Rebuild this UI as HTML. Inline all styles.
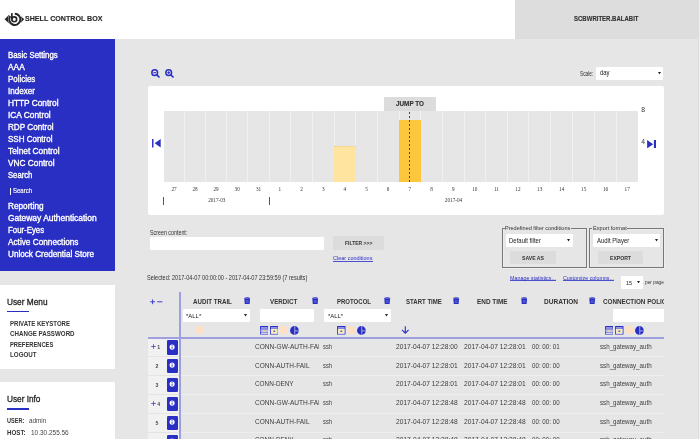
<!DOCTYPE html>
<html><head><meta charset="utf-8"><title>Shell Control Box</title><style>html,body{margin:0;padding:0;}body{width:700px;height:439px;overflow:hidden;position:relative;background:#e6e6e6;font-family:'Liberation Sans',sans-serif;}#r{position:absolute;left:0;top:0;width:700px;height:439px;overflow:hidden;will-change:transform;transform:translateZ(0);}#r div,#r svg,#r span{position:absolute;display:block;}.t{white-space:pre;line-height:1;}</style></head><body><div id="r">
<div style="left:0px;top:0px;width:514.5px;height:39px;background:#fff;"></div>
<div style="left:514.5px;top:0px;width:183.5px;height:39px;background:#dddddd;"></div>
<div style="left:698px;top:0px;width:1px;height:439px;background:#dcdcdc;"></div>
<div style="left:699px;top:0px;width:1px;height:439px;background:#f0f0f0;"></div>
<svg style="left:4px;top:11px" width="21" height="16" viewBox="4 11 21 16"><path d="M4.6 19.2L9.4 14.6V23.8Z" fill="#262626"/><path d="M24.2 19.3L21.0 16.2V22.4Z" fill="#262626"/><circle cx="14.8" cy="19.35" r="6.8" fill="#fff"/><path d="M14.80 13.75A5.6 5.6 0 1 1 10.27 16.06" fill="none" stroke="#262626" stroke-width="2.0"/><circle cx="14.25" cy="19.3" r="2.4" fill="none" stroke="#262626" stroke-width="1.65"/><rect x="11.03" y="13.1" width="1.65" height="6.4" fill="#262626"/></svg>
<div style="left:0px;top:39px;width:115px;height:232px;background:#2a2fc4;"></div>
<div style="left:9.9px;top:187.5px;width:1.2px;height:7.5px;background:#fff;"></div>
<div style="left:0px;top:285px;width:115px;height:83.5px;background:#fff;"></div>
<div style="left:7.4px;top:310.7px;width:22px;height:1.7px;background:#2a2fc4;"></div>
<div style="left:0px;top:382px;width:115px;height:60px;background:#fff;"></div>
<div style="left:7.4px;top:408px;width:22px;height:1.5px;background:#2a2fc4;"></div>
<div style="left:147.5px;top:86.3px;width:516.3px;height:129px;background:#fff;border-radius:2px;"></div>
<div style="left:595.8px;top:66.7px;width:67.5px;height:13.4px;background:#fff;border-radius:1px;"></div>
<svg style="left:657.6px;top:71.8px" width="3.0" height="2.4" viewBox="0 0 10 8"><path d="M0 0H10L5 8Z" fill="#222"/></svg>
<div style="left:163.7px;top:110.8px;width:474.3px;height:71.2px;background:#e6e6e6;"></div>
<div style="left:184.0px;top:110.8px;width:1px;height:71.2px;background:#f1f1f1;"></div>
<div style="left:205.0px;top:110.8px;width:1px;height:71.2px;background:#f1f1f1;"></div>
<div style="left:226.0px;top:110.8px;width:1px;height:71.2px;background:#f1f1f1;"></div>
<div style="left:247.4px;top:110.8px;width:1px;height:71.2px;background:#f1f1f1;"></div>
<div style="left:268.7px;top:110.8px;width:1px;height:71.2px;background:#f1f1f1;"></div>
<div style="left:290.0px;top:110.8px;width:1px;height:71.2px;background:#f1f1f1;"></div>
<div style="left:312.0px;top:110.8px;width:1px;height:71.2px;background:#f1f1f1;"></div>
<div style="left:333.6px;top:110.8px;width:1px;height:71.2px;background:#f1f1f1;"></div>
<div style="left:355.2px;top:110.8px;width:1px;height:71.2px;background:#f1f1f1;"></div>
<div style="left:376.7px;top:110.8px;width:1px;height:71.2px;background:#f1f1f1;"></div>
<div style="left:398.6px;top:110.8px;width:1px;height:71.2px;background:#f1f1f1;"></div>
<div style="left:420.0px;top:110.8px;width:1px;height:71.2px;background:#f1f1f1;"></div>
<div style="left:442.0px;top:110.8px;width:1px;height:71.2px;background:#f1f1f1;"></div>
<div style="left:463.5px;top:110.8px;width:1px;height:71.2px;background:#f1f1f1;"></div>
<div style="left:485.1px;top:110.8px;width:1px;height:71.2px;background:#f1f1f1;"></div>
<div style="left:506.7px;top:110.8px;width:1px;height:71.2px;background:#f1f1f1;"></div>
<div style="left:528.2px;top:110.8px;width:1px;height:71.2px;background:#f1f1f1;"></div>
<div style="left:550.1px;top:110.8px;width:1px;height:71.2px;background:#f1f1f1;"></div>
<div style="left:572.2px;top:110.8px;width:1px;height:71.2px;background:#f1f1f1;"></div>
<div style="left:594.1px;top:110.8px;width:1px;height:71.2px;background:#f1f1f1;"></div>
<div style="left:615.9px;top:110.8px;width:1px;height:71.2px;background:#f1f1f1;"></div>
<div style="left:334.1px;top:146.4px;width:21.6px;height:35.6px;background:#ffe4a0;border-top:0.8px dotted #f0cf78;box-sizing:border-box;"></div>
<div style="left:399.0px;top:119.7px;width:21.6px;height:62.3px;background:#fcc73c;"></div>
<div style="left:409.3px;top:111.5px;width:1.2px;height:70.5px;background:repeating-linear-gradient(to bottom,#4a4a4a 0,#4a4a4a 1.7px,transparent 1.7px,transparent 4px);"></div>
<div style="left:383.9px;top:96.5px;width:51.8px;height:14.3px;background:#dcdcdc;border-radius:1px 1px 0 0;"></div>
<div style="left:163.3px;top:196.5px;width:0.8px;height:8px;background:#555;"></div>
<div style="left:269.0px;top:196.5px;width:0.8px;height:8px;background:#555;"></div>
<svg style="left:151.9px;top:139.4px" width="8.8" height="8.5" viewBox="0 0 8.8 8.5"><rect x="0.05" y="0" width="1.45" height="8.5" fill="#2a2fc4"/><path d="M8.7 0V8.5L2.7 4.25Z" fill="#2a2fc4"/></svg>
<svg style="left:647px;top:139.5px" width="9.2" height="8.4" viewBox="0 0 9.2 8.4"><rect x="6.9" y="0" width="2.1" height="8.4" fill="#2a2fc4"/><path d="M0.1 0V8.4L6.2 4.2Z" fill="#2a2fc4"/></svg>
<svg style="left:150.5px;top:68.8px" width="9" height="9" viewBox="0 0 9 9"><circle cx="3.7" cy="3.7" r="2.85" fill="none" stroke="#2a2fc4" stroke-width="1.5"/><path d="M6.0 6.0L8.0 8.0" stroke="#2a2fc4" stroke-width="1.7" stroke-linecap="round"/><path d="M2.3 3.7H5.1" stroke="#2a2fc4" stroke-width="1.1" fill="none"/></svg>
<svg style="left:165.0px;top:68.8px" width="9" height="9" viewBox="0 0 9 9"><circle cx="3.7" cy="3.7" r="2.85" fill="none" stroke="#2a2fc4" stroke-width="1.5"/><path d="M6.0 6.0L8.0 8.0" stroke="#2a2fc4" stroke-width="1.7" stroke-linecap="round"/><path d="M2.3 3.7H5.1" stroke="#2a2fc4" stroke-width="1.1" fill="none"/><path d="M3.7 2.3V5.1" stroke="#2a2fc4" stroke-width="1.1" fill="none"/></svg>
<div style="left:150.3px;top:236.8px;width:173.8px;height:13.1px;background:#fff;border-radius:1px;"></div>
<div style="left:332.7px;top:236.1px;width:51.7px;height:14.1px;background:#dcdcdc;border-radius:1px;"></div>
<div style="left:333.3px;top:260.65px;width:39.4px;height:0.75px;background:#4b50cf;"></div>
<div style="left:501.8px;top:227.8px;width:85.4px;height:40.2px;border:1px solid #777;box-shadow:inset 0.6px 0.6px 0 #f4f4f4, 0.6px 0.6px 0 #f4f4f4;box-sizing:border-box;"></div>
<div style="left:589.2px;top:227.8px;width:74.8px;height:40.2px;border:1px solid #777;box-shadow:inset 0.6px 0.6px 0 #f4f4f4, 0.6px 0.6px 0 #f4f4f4;box-sizing:border-box;"></div>
<div style="left:504.6px;top:225px;width:66.2px;height:6px;background:#e6e6e6;"></div>
<div style="left:592.0px;top:225px;width:34.8px;height:6px;background:#e6e6e6;"></div>
<div style="left:505.8px;top:234.4px;width:67.4px;height:12.9px;background:#fff;border-radius:1px;"></div>
<div style="left:592.9px;top:234.4px;width:67.4px;height:12.9px;background:#fff;border-radius:1px;"></div>
<svg style="left:567.2px;top:239.4px" width="3.0" height="2.4" viewBox="0 0 10 8"><path d="M0 0H10L5 8Z" fill="#222"/></svg>
<svg style="left:654.7px;top:239.4px" width="3.0" height="2.4" viewBox="0 0 10 8"><path d="M0 0H10L5 8Z" fill="#222"/></svg>
<div style="left:510.1px;top:250.9px;width:45.9px;height:13.6px;background:#dcdcdc;border-radius:1px;"></div>
<div style="left:597.9px;top:250.9px;width:45.2px;height:13.6px;background:#dcdcdc;border-radius:1px;"></div>
<div style="left:509.8px;top:280.3px;width:45.9px;height:0.75px;background:#4b50cf;"></div>
<div style="left:562.7px;top:280.3px;width:50.9px;height:0.75px;background:#4b50cf;"></div>
<div style="left:620.8px;top:275.8px;width:21.8px;height:13.2px;background:#fff;border-radius:1px;"></div>
<svg style="left:636.8px;top:281px" width="3.0" height="2.4" viewBox="0 0 10 8"><path d="M0 0H10L5 8Z" fill="#222"/></svg>
<div style="left:147.5px;top:337.8px;width:31.3px;height:102px;background:#f1f1f1;"></div>
<div style="left:147.5px;top:355.8px;width:31.3px;height:1px;background:#e4e4e4;"></div>
<div style="left:180.6px;top:355.8px;width:483.4px;height:1px;background:#eeeeee;"></div>
<div style="left:147.5px;top:374.7px;width:31.3px;height:1px;background:#e4e4e4;"></div>
<div style="left:180.6px;top:374.7px;width:483.4px;height:1px;background:#eeeeee;"></div>
<div style="left:147.5px;top:393.6px;width:31.3px;height:1px;background:#e4e4e4;"></div>
<div style="left:180.6px;top:393.6px;width:483.4px;height:1px;background:#eeeeee;"></div>
<div style="left:147.5px;top:412.7px;width:31.3px;height:1px;background:#e4e4e4;"></div>
<div style="left:180.6px;top:412.7px;width:483.4px;height:1px;background:#eeeeee;"></div>
<div style="left:147.5px;top:431.7px;width:31.3px;height:1px;background:#e4e4e4;"></div>
<div style="left:180.6px;top:431.7px;width:483.4px;height:1px;background:#eeeeee;"></div>
<div style="left:178.95px;top:291.9px;width:1.6px;height:150px;background:#9c9fe3;"></div>
<div style="left:147.5px;top:337.0px;width:516.5px;height:1.5px;background:#9ea0e1;"></div>
<svg style="left:149.8px;top:298.8px" width="13" height="6" viewBox="0 0 13 6"><path d="M0.2 2.8H5M2.6 0.4V5.2M7.2 2.8H12.4" stroke="#3f44cc" stroke-width="1.0" fill="none"/></svg>
<svg style="left:243.75px;top:296.9px" width="6.4" height="7.2" viewBox="0 0 6.4 7.2"><path d="M2.1 0.9V0.2H4.3V0.9" stroke="#2a2fc4" stroke-width="0.7" fill="none"/><rect x="0.1" y="0.8" width="6.2" height="1.0" rx="0.3" fill="#2a2fc4"/><path d="M0.4 1.9H6.0L5.7 6.6Q5.65 7.2 5.1 7.2H1.3Q0.75 7.2 0.7 6.6Z" fill="#2a2fc4"/><path d="M2.3 3V6M3.2 3V6M4.1 3V6" stroke="#7f83e0" stroke-width="0.45"/></svg>
<svg style="left:311.8px;top:296.9px" width="6.4" height="7.2" viewBox="0 0 6.4 7.2"><path d="M2.1 0.9V0.2H4.3V0.9" stroke="#2a2fc4" stroke-width="0.7" fill="none"/><rect x="0.1" y="0.8" width="6.2" height="1.0" rx="0.3" fill="#2a2fc4"/><path d="M0.4 1.9H6.0L5.7 6.6Q5.65 7.2 5.1 7.2H1.3Q0.75 7.2 0.7 6.6Z" fill="#2a2fc4"/><path d="M2.3 3V6M3.2 3V6M4.1 3V6" stroke="#7f83e0" stroke-width="0.45"/></svg>
<svg style="left:384.45px;top:296.9px" width="6.4" height="7.2" viewBox="0 0 6.4 7.2"><path d="M2.1 0.9V0.2H4.3V0.9" stroke="#2a2fc4" stroke-width="0.7" fill="none"/><rect x="0.1" y="0.8" width="6.2" height="1.0" rx="0.3" fill="#2a2fc4"/><path d="M0.4 1.9H6.0L5.7 6.6Q5.65 7.2 5.1 7.2H1.3Q0.75 7.2 0.7 6.6Z" fill="#2a2fc4"/><path d="M2.3 3V6M3.2 3V6M4.1 3V6" stroke="#7f83e0" stroke-width="0.45"/></svg>
<svg style="left:452.75px;top:296.9px" width="6.4" height="7.2" viewBox="0 0 6.4 7.2"><path d="M2.1 0.9V0.2H4.3V0.9" stroke="#2a2fc4" stroke-width="0.7" fill="none"/><rect x="0.1" y="0.8" width="6.2" height="1.0" rx="0.3" fill="#2a2fc4"/><path d="M0.4 1.9H6.0L5.7 6.6Q5.65 7.2 5.1 7.2H1.3Q0.75 7.2 0.7 6.6Z" fill="#2a2fc4"/><path d="M2.3 3V6M3.2 3V6M4.1 3V6" stroke="#7f83e0" stroke-width="0.45"/></svg>
<svg style="left:520.8499999999999px;top:296.9px" width="6.4" height="7.2" viewBox="0 0 6.4 7.2"><path d="M2.1 0.9V0.2H4.3V0.9" stroke="#2a2fc4" stroke-width="0.7" fill="none"/><rect x="0.1" y="0.8" width="6.2" height="1.0" rx="0.3" fill="#2a2fc4"/><path d="M0.4 1.9H6.0L5.7 6.6Q5.65 7.2 5.1 7.2H1.3Q0.75 7.2 0.7 6.6Z" fill="#2a2fc4"/><path d="M2.3 3V6M3.2 3V6M4.1 3V6" stroke="#7f83e0" stroke-width="0.45"/></svg>
<svg style="left:589.1999999999999px;top:296.9px" width="6.4" height="7.2" viewBox="0 0 6.4 7.2"><path d="M2.1 0.9V0.2H4.3V0.9" stroke="#2a2fc4" stroke-width="0.7" fill="none"/><rect x="0.1" y="0.8" width="6.2" height="1.0" rx="0.3" fill="#2a2fc4"/><path d="M0.4 1.9H6.0L5.7 6.6Q5.65 7.2 5.1 7.2H1.3Q0.75 7.2 0.7 6.6Z" fill="#2a2fc4"/><path d="M2.3 3V6M3.2 3V6M4.1 3V6" stroke="#7f83e0" stroke-width="0.45"/></svg>
<div style="left:182.6px;top:309.2px;width:67.7px;height:13.3px;background:#fff;border-radius:1px;"></div>
<div style="left:259.6px;top:309.2px;width:54.2px;height:13.3px;background:#fff;border-radius:1px;"></div>
<div style="left:323.9px;top:309.2px;width:67.1px;height:13.3px;background:#fff;border-radius:1px;"></div>
<div style="left:612.9px;top:309.2px;width:51.1px;height:13.3px;background:#fff;border-radius:1px 0 0 1px;"></div>
<svg style="left:244.1px;top:314.3px" width="3.0" height="2.4" viewBox="0 0 10 8"><path d="M0 0H10L5 8Z" fill="#222"/></svg>
<svg style="left:385.1px;top:314.3px" width="3.0" height="2.4" viewBox="0 0 10 8"><path d="M0 0H10L5 8Z" fill="#222"/></svg>
<svg style="left:196.2px;top:326.3px" width="8.2" height="7.9" viewBox="0 0 8.2 7.9"><rect x="0.1" y="0.1" width="6.1" height="6.6" rx="0.8" fill="#fde0c6"/><rect x="1.9" y="1.4" width="6.2" height="6.4" rx="0.8" fill="#fde0c6"/></svg>
<svg style="left:259.5px;top:326.1px" width="8.5" height="8.6" viewBox="0 0 8.5 8.6"><rect x="0" y="0" width="8.5" height="8.6" rx="0.4" fill="#2a2fc4"/><rect x="0.9" y="1.0" width="6.7" height="0.55" fill="#e9e9fb"/><rect x="0.8" y="2.5" width="6.9" height="5.4" fill="#e3e4fa"/><rect x="0.8" y="3.4" width="6.9" height="0.7" fill="#5b5fd6"/><rect x="0.8" y="6.2" width="6.9" height="0.7" fill="#5b5fd6"/><rect x="0.8" y="4.1" width="6.9" height="2.1" fill="#b9bbee"/><rect x="3.1" y="4.4" width="2.1" height="1.5" fill="#f6e27a"/></svg>
<svg style="left:269.7px;top:326.1px" width="8.5" height="8.6" viewBox="0 0 8.5 8.6"><rect x="0" y="0" width="8.5" height="8.6" rx="0.4" fill="#2a2fc4"/><rect x="0.9" y="1.0" width="6.7" height="0.55" fill="#e9e9fb"/><rect x="0.8" y="2.5" width="6.9" height="5.4" fill="#dcdcf8"/><rect x="1.3" y="3.1" width="5.9" height="4.2" fill="#fbeeb0"/><ellipse cx="4.3" cy="5.2" rx="1.15" ry="0.65" fill="#3a3fd0"/></svg>
<svg style="left:280.0px;top:326.3px" width="8.2" height="7.9" viewBox="0 0 8.2 7.9"><rect x="0.1" y="0.1" width="6.1" height="6.6" rx="0.8" fill="#fde0c6"/><rect x="1.9" y="1.4" width="6.2" height="6.4" rx="0.8" fill="#fde0c6"/></svg>
<svg style="left:289.9px;top:325.8px" width="9" height="9" viewBox="0 0 9 9"><circle cx="4.45" cy="4.5" r="4.4" fill="#2a2fc4"/><path d="M4.75 0V9" stroke="#ececf4" stroke-width="0.6" fill="none"/><path d="M4.75 4.9H9" stroke="#ececf4" stroke-width="0.6" fill="none"/></svg>
<svg style="left:337.0px;top:326.1px" width="8.5" height="8.6" viewBox="0 0 8.5 8.6"><rect x="0" y="0" width="8.5" height="8.6" rx="0.4" fill="#2a2fc4"/><rect x="0.9" y="1.0" width="6.7" height="0.55" fill="#e9e9fb"/><rect x="0.8" y="2.5" width="6.9" height="5.4" fill="#dcdcf8"/><rect x="1.3" y="3.1" width="5.9" height="4.2" fill="#fbeeb0"/><ellipse cx="4.3" cy="5.2" rx="1.15" ry="0.65" fill="#3a3fd0"/></svg>
<svg style="left:347.2px;top:326.3px" width="8.2" height="7.9" viewBox="0 0 8.2 7.9"><rect x="0.1" y="0.1" width="6.1" height="6.6" rx="0.8" fill="#fde0c6"/><rect x="1.9" y="1.4" width="6.2" height="6.4" rx="0.8" fill="#fde0c6"/></svg>
<svg style="left:357.0px;top:325.8px" width="9" height="9" viewBox="0 0 9 9"><circle cx="4.45" cy="4.5" r="4.4" fill="#2a2fc4"/><path d="M4.75 0V9" stroke="#ececf4" stroke-width="0.6" fill="none"/><path d="M4.75 4.9H9" stroke="#ececf4" stroke-width="0.6" fill="none"/></svg>
<svg style="left:604.9px;top:326.1px" width="8.5" height="8.6" viewBox="0 0 8.5 8.6"><rect x="0" y="0" width="8.5" height="8.6" rx="0.4" fill="#2a2fc4"/><rect x="0.9" y="1.0" width="6.7" height="0.55" fill="#e9e9fb"/><rect x="0.8" y="2.5" width="6.9" height="5.4" fill="#e3e4fa"/><rect x="0.8" y="3.4" width="6.9" height="0.7" fill="#5b5fd6"/><rect x="0.8" y="6.2" width="6.9" height="0.7" fill="#5b5fd6"/><rect x="0.8" y="4.1" width="6.9" height="2.1" fill="#b9bbee"/><rect x="3.1" y="4.4" width="2.1" height="1.5" fill="#f6e27a"/></svg>
<svg style="left:615.1px;top:326.1px" width="8.5" height="8.6" viewBox="0 0 8.5 8.6"><rect x="0" y="0" width="8.5" height="8.6" rx="0.4" fill="#2a2fc4"/><rect x="0.9" y="1.0" width="6.7" height="0.55" fill="#e9e9fb"/><rect x="0.8" y="2.5" width="6.9" height="5.4" fill="#dcdcf8"/><rect x="1.3" y="3.1" width="5.9" height="4.2" fill="#fbeeb0"/><ellipse cx="4.3" cy="5.2" rx="1.15" ry="0.65" fill="#3a3fd0"/></svg>
<svg style="left:625.3px;top:326.3px" width="8.2" height="7.9" viewBox="0 0 8.2 7.9"><rect x="0.1" y="0.1" width="6.1" height="6.6" rx="0.8" fill="#fde0c6"/><rect x="1.9" y="1.4" width="6.2" height="6.4" rx="0.8" fill="#fde0c6"/></svg>
<svg style="left:635.2px;top:325.8px" width="9" height="9" viewBox="0 0 9 9"><circle cx="4.45" cy="4.5" r="4.4" fill="#2a2fc4"/><path d="M4.75 0V9" stroke="#ececf4" stroke-width="0.6" fill="none"/><path d="M4.75 4.9H9" stroke="#ececf4" stroke-width="0.6" fill="none"/></svg>
<svg style="left:400.6px;top:326.2px" width="8.6" height="7.8" viewBox="0 0 8.6 7.8"><path d="M4.3 0.2V7M1 3.9L4.3 7.2L7.6 3.9" stroke="#2a2fc4" stroke-width="1.1" fill="none"/></svg>
<div style="left:166.9px;top:340.2px;width:10.8px;height:14.4px;background:#2a2fc4;border-radius:1.2px;"></div>
<svg style="left:169.25px;top:343.59999999999997px" width="6.2" height="6.2" viewBox="0 0 6.2 6.2"><circle cx="3.1" cy="3.1" r="2.55" fill="#fff"/><rect x="2.65" y="2.6" width="0.9" height="2.2" fill="#2a2fc4"/><rect x="2.65" y="1.2" width="0.9" height="0.9" fill="#2a2fc4"/></svg>
<svg style="left:150.6px;top:344.2px" width="5" height="5" viewBox="0 0 5 5"><path d="M0.2 2.5H4.8M2.5 0.2V4.8" stroke="#474cd2" stroke-width="0.85" fill="none"/></svg>
<div style="left:166.9px;top:358.8px;width:10.8px;height:14.4px;background:#2a2fc4;border-radius:1.2px;"></div>
<svg style="left:169.25px;top:362.2px" width="6.2" height="6.2" viewBox="0 0 6.2 6.2"><circle cx="3.1" cy="3.1" r="2.55" fill="#fff"/><rect x="2.65" y="2.6" width="0.9" height="2.2" fill="#2a2fc4"/><rect x="2.65" y="1.2" width="0.9" height="0.9" fill="#2a2fc4"/></svg>
<div style="left:166.9px;top:377.7px;width:10.8px;height:14.4px;background:#2a2fc4;border-radius:1.2px;"></div>
<svg style="left:169.25px;top:381.09999999999997px" width="6.2" height="6.2" viewBox="0 0 6.2 6.2"><circle cx="3.1" cy="3.1" r="2.55" fill="#fff"/><rect x="2.65" y="2.6" width="0.9" height="2.2" fill="#2a2fc4"/><rect x="2.65" y="1.2" width="0.9" height="0.9" fill="#2a2fc4"/></svg>
<div style="left:166.9px;top:396.6px;width:10.8px;height:14.4px;background:#2a2fc4;border-radius:1.2px;"></div>
<svg style="left:169.25px;top:400.0px" width="6.2" height="6.2" viewBox="0 0 6.2 6.2"><circle cx="3.1" cy="3.1" r="2.55" fill="#fff"/><rect x="2.65" y="2.6" width="0.9" height="2.2" fill="#2a2fc4"/><rect x="2.65" y="1.2" width="0.9" height="0.9" fill="#2a2fc4"/></svg>
<svg style="left:150.6px;top:400.6px" width="5" height="5" viewBox="0 0 5 5"><path d="M0.2 2.5H4.8M2.5 0.2V4.8" stroke="#474cd2" stroke-width="0.85" fill="none"/></svg>
<div style="left:166.9px;top:415.7px;width:10.8px;height:14.4px;background:#2a2fc4;border-radius:1.2px;"></div>
<svg style="left:169.25px;top:419.09999999999997px" width="6.2" height="6.2" viewBox="0 0 6.2 6.2"><circle cx="3.1" cy="3.1" r="2.55" fill="#fff"/><rect x="2.65" y="2.6" width="0.9" height="2.2" fill="#2a2fc4"/><rect x="2.65" y="1.2" width="0.9" height="0.9" fill="#2a2fc4"/></svg>
<div style="left:166.9px;top:434.7px;width:10.8px;height:14.4px;background:#2a2fc4;border-radius:1.2px;"></div>
<svg style="left:169.25px;top:438.09999999999997px" width="6.2" height="6.2" viewBox="0 0 6.2 6.2"><circle cx="3.1" cy="3.1" r="2.55" fill="#fff"/><rect x="2.65" y="2.6" width="0.9" height="2.2" fill="#2a2fc4"/><rect x="2.65" y="1.2" width="0.9" height="0.9" fill="#2a2fc4"/></svg>
<span id="t0" class="t" style="left:25.4px;top:14.74px;font-size:7.83px;font-weight:bold;color:#2a2a2a;font-family:'Liberation Sans',sans-serif;transform:scaleX(0.9074);transform-origin:0 0;-webkit-text-stroke:0.15px #2a2a2a;">SHELL CONTROL BOX</span>
<span id="t1" class="t" style="left:574.3px;top:16.08px;font-size:6.96px;font-weight:bold;color:#303030;font-family:'Liberation Sans',sans-serif;transform:scaleX(0.8652);transform-origin:0 0;-webkit-text-stroke:0.12px #303030;">SCBWRITER.BALABIT</span>
<span id="t2" class="t" style="left:7.7px;top:50.81px;font-size:8.7px;font-weight:normal;color:#fff;font-family:'Liberation Sans',sans-serif;transform:scaleX(0.9044);transform-origin:0 0;-webkit-text-stroke:0.35px #fff;">Basic Settings</span>
<span id="t3" class="t" style="left:7.7px;top:62.81px;font-size:8.7px;font-weight:normal;color:#fff;font-family:'Liberation Sans',sans-serif;transform:scaleX(0.9603);transform-origin:0 0;-webkit-text-stroke:0.35px #fff;">AAA</span>
<span id="t4" class="t" style="left:7.7px;top:74.81px;font-size:8.7px;font-weight:normal;color:#fff;font-family:'Liberation Sans',sans-serif;transform:scaleX(0.9119);transform-origin:0 0;-webkit-text-stroke:0.35px #fff;">Policies</span>
<span id="t5" class="t" style="left:7.7px;top:86.81px;font-size:8.7px;font-weight:normal;color:#fff;font-family:'Liberation Sans',sans-serif;transform:scaleX(0.9315);transform-origin:0 0;-webkit-text-stroke:0.35px #fff;">Indexer</span>
<span id="t6" class="t" style="left:7.7px;top:98.81px;font-size:8.7px;font-weight:normal;color:#fff;font-family:'Liberation Sans',sans-serif;transform:scaleX(0.9537);transform-origin:0 0;-webkit-text-stroke:0.35px #fff;">HTTP Control</span>
<span id="t7" class="t" style="left:7.7px;top:110.81px;font-size:8.7px;font-weight:normal;color:#fff;font-family:'Liberation Sans',sans-serif;transform:scaleX(0.9612);transform-origin:0 0;-webkit-text-stroke:0.35px #fff;">ICA Control</span>
<span id="t8" class="t" style="left:7.7px;top:122.80px;font-size:8.7px;font-weight:normal;color:#fff;font-family:'Liberation Sans',sans-serif;transform:scaleX(0.9360);transform-origin:0 0;-webkit-text-stroke:0.35px #fff;">RDP Control</span>
<span id="t9" class="t" style="left:7.7px;top:134.80px;font-size:8.7px;font-weight:normal;color:#fff;font-family:'Liberation Sans',sans-serif;transform:scaleX(0.9214);transform-origin:0 0;-webkit-text-stroke:0.35px #fff;">SSH Control</span>
<span id="t10" class="t" style="left:7.7px;top:146.80px;font-size:8.7px;font-weight:normal;color:#fff;font-family:'Liberation Sans',sans-serif;transform:scaleX(0.9607);transform-origin:0 0;-webkit-text-stroke:0.35px #fff;">Telnet Control</span>
<span id="t11" class="t" style="left:7.7px;top:158.80px;font-size:8.7px;font-weight:normal;color:#fff;font-family:'Liberation Sans',sans-serif;transform:scaleX(0.9535);transform-origin:0 0;-webkit-text-stroke:0.35px #fff;">VNC Control</span>
<span id="t12" class="t" style="left:7.7px;top:170.80px;font-size:8.7px;font-weight:normal;color:#fff;font-family:'Liberation Sans',sans-serif;transform:scaleX(0.8826);transform-origin:0 0;-webkit-text-stroke:0.35px #fff;">Search</span>
<span id="t13" class="t" style="left:13px;top:188.08px;font-size:6.96px;font-weight:normal;color:#fff;font-family:'Liberation Sans',sans-serif;transform:scaleX(0.8624);transform-origin:0 0;-webkit-text-stroke:0.15px #fff;">Search</span>
<span id="t14" class="t" style="left:7.7px;top:201.60px;font-size:8.7px;font-weight:normal;color:#fff;font-family:'Liberation Sans',sans-serif;transform:scaleX(0.9450);transform-origin:0 0;-webkit-text-stroke:0.35px #fff;">Reporting</span>
<span id="t15" class="t" style="left:7.7px;top:213.60px;font-size:8.7px;font-weight:normal;color:#fff;font-family:'Liberation Sans',sans-serif;transform:scaleX(0.9706);transform-origin:0 0;-webkit-text-stroke:0.35px #fff;">Gateway Authentication</span>
<span id="t16" class="t" style="left:7.7px;top:225.60px;font-size:8.7px;font-weight:normal;color:#fff;font-family:'Liberation Sans',sans-serif;transform:scaleX(0.9007);transform-origin:0 0;-webkit-text-stroke:0.35px #fff;">Four-Eyes</span>
<span id="t17" class="t" style="left:7.7px;top:237.60px;font-size:8.7px;font-weight:normal;color:#fff;font-family:'Liberation Sans',sans-serif;transform:scaleX(0.9479);transform-origin:0 0;-webkit-text-stroke:0.35px #fff;">Active Connections</span>
<span id="t18" class="t" style="left:7.7px;top:249.60px;font-size:8.7px;font-weight:normal;color:#fff;font-family:'Liberation Sans',sans-serif;transform:scaleX(0.9373);transform-origin:0 0;-webkit-text-stroke:0.35px #fff;">Unlock Credential Store</span>
<span id="t19" class="t" style="left:7.4px;top:298.11px;font-size:9.28px;font-weight:normal;color:#222;font-family:'Liberation Sans',sans-serif;transform:scaleX(0.8935);transform-origin:0 0;-webkit-text-stroke:0.3px #222;">User Menu</span>
<span id="t20" class="t" style="left:10.2px;top:321.38px;font-size:6.96px;font-weight:bold;color:#333;font-family:'Liberation Sans',sans-serif;transform:scaleX(0.8674);transform-origin:0 0;">PRIVATE KEYSTORE</span>
<span id="t21" class="t" style="left:10.2px;top:330.58px;font-size:6.96px;font-weight:bold;color:#333;font-family:'Liberation Sans',sans-serif;transform:scaleX(0.8910);transform-origin:0 0;">CHANGE PASSWORD</span>
<span id="t22" class="t" style="left:10.2px;top:341.78px;font-size:6.96px;font-weight:bold;color:#333;font-family:'Liberation Sans',sans-serif;transform:scaleX(0.8299);transform-origin:0 0;">PREFERENCES</span>
<span id="t23" class="t" style="left:10.2px;top:351.98px;font-size:6.96px;font-weight:bold;color:#333;font-family:'Liberation Sans',sans-serif;transform:scaleX(0.8941);transform-origin:0 0;">LOGOUT</span>
<span id="t24" class="t" style="left:7.4px;top:395.41px;font-size:9.28px;font-weight:normal;color:#222;font-family:'Liberation Sans',sans-serif;transform:scaleX(0.8884);transform-origin:0 0;-webkit-text-stroke:0.3px #222;">User Info</span>
<span id="t25" class="t" style="left:7.4px;top:417.63px;font-size:6.67px;font-weight:bold;color:#333;font-family:'Liberation Sans',sans-serif;transform:scaleX(0.8350);transform-origin:0 0;">USER:</span>
<span id="t26" class="t" style="left:29.2px;top:417.51px;font-size:6.81px;font-weight:normal;color:#484848;font-family:'Liberation Sans',sans-serif;transform:scaleX(0.9289);transform-origin:0 0;">admin</span>
<span id="t27" class="t" style="left:7.4px;top:430.33px;font-size:6.67px;font-weight:bold;color:#333;font-family:'Liberation Sans',sans-serif;transform:scaleX(0.9315);transform-origin:0 0;">HOST:</span>
<span id="t28" class="t" style="left:30.6px;top:430.21px;font-size:6.81px;font-weight:normal;color:#484848;font-family:'Liberation Sans',sans-serif;transform:scaleX(0.9499);transform-origin:0 0;">10.30.255.56</span>
<span id="t29" class="t" style="left:579.8px;top:70.83px;font-size:6.67px;font-weight:normal;color:#333;font-family:'Liberation Sans',sans-serif;transform:scaleX(0.7135);transform-origin:0 0;">Scale:</span>
<span id="t30" class="t" style="left:599.5px;top:69.78px;font-size:6.38px;font-weight:normal;color:#222;font-family:'Liberation Sans',sans-serif;transform:scaleX(0.9337);transform-origin:0 0;">day</span>
<span id="t31" class="t" style="left:395.8px;top:100.93px;font-size:6.67px;font-weight:bold;color:#303030;font-family:'Liberation Sans',sans-serif;transform:scaleX(0.9537);transform-origin:0 0;-webkit-text-stroke:0.12px #303030;">JUMP TO</span>
<span id="t32" class="t" style="left:174.1px;top:187.28px;font-size:5.2px;font-weight:normal;color:#333;font-family:'Liberation Serif',serif;transform:translateX(-50%);">27</span>
<span id="t33" class="t" style="left:195.0px;top:187.28px;font-size:5.2px;font-weight:normal;color:#333;font-family:'Liberation Serif',serif;transform:translateX(-50%);">28</span>
<span id="t34" class="t" style="left:216.0px;top:187.28px;font-size:5.2px;font-weight:normal;color:#333;font-family:'Liberation Serif',serif;transform:translateX(-50%);">29</span>
<span id="t35" class="t" style="left:237.2px;top:187.28px;font-size:5.2px;font-weight:normal;color:#333;font-family:'Liberation Serif',serif;transform:translateX(-50%);">30</span>
<span id="t36" class="t" style="left:258.55px;top:187.28px;font-size:5.2px;font-weight:normal;color:#333;font-family:'Liberation Serif',serif;transform:translateX(-50%);">31</span>
<span id="t37" class="t" style="left:279.85px;top:187.28px;font-size:5.2px;font-weight:normal;color:#333;font-family:'Liberation Serif',serif;transform:translateX(-50%);">1</span>
<span id="t38" class="t" style="left:301.5px;top:187.28px;font-size:5.2px;font-weight:normal;color:#333;font-family:'Liberation Serif',serif;transform:translateX(-50%);">2</span>
<span id="t39" class="t" style="left:323.3px;top:187.28px;font-size:5.2px;font-weight:normal;color:#333;font-family:'Liberation Serif',serif;transform:translateX(-50%);">3</span>
<span id="t40" class="t" style="left:344.9px;top:187.28px;font-size:5.2px;font-weight:normal;color:#333;font-family:'Liberation Serif',serif;transform:translateX(-50%);">4</span>
<span id="t41" class="t" style="left:366.45px;top:187.28px;font-size:5.2px;font-weight:normal;color:#333;font-family:'Liberation Serif',serif;transform:translateX(-50%);">5</span>
<span id="t42" class="t" style="left:388.15px;top:187.28px;font-size:5.2px;font-weight:normal;color:#333;font-family:'Liberation Serif',serif;transform:translateX(-50%);">6</span>
<span id="t43" class="t" style="left:409.8px;top:187.28px;font-size:5.2px;font-weight:normal;color:#333;font-family:'Liberation Serif',serif;transform:translateX(-50%);">7</span>
<span id="t44" class="t" style="left:431.5px;top:187.28px;font-size:5.2px;font-weight:normal;color:#333;font-family:'Liberation Serif',serif;transform:translateX(-50%);">8</span>
<span id="t45" class="t" style="left:453.25px;top:187.28px;font-size:5.2px;font-weight:normal;color:#333;font-family:'Liberation Serif',serif;transform:translateX(-50%);">9</span>
<span id="t46" class="t" style="left:474.8px;top:187.28px;font-size:5.2px;font-weight:normal;color:#333;font-family:'Liberation Serif',serif;transform:translateX(-50%);">10</span>
<span id="t47" class="t" style="left:496.4px;top:187.28px;font-size:5.2px;font-weight:normal;color:#333;font-family:'Liberation Serif',serif;transform:translateX(-50%);">11</span>
<span id="t48" class="t" style="left:517.95px;top:187.28px;font-size:5.2px;font-weight:normal;color:#333;font-family:'Liberation Serif',serif;transform:translateX(-50%);">12</span>
<span id="t49" class="t" style="left:539.6500000000001px;top:187.28px;font-size:5.2px;font-weight:normal;color:#333;font-family:'Liberation Serif',serif;transform:translateX(-50%);">13</span>
<span id="t50" class="t" style="left:561.6500000000001px;top:187.28px;font-size:5.2px;font-weight:normal;color:#333;font-family:'Liberation Serif',serif;transform:translateX(-50%);">14</span>
<span id="t51" class="t" style="left:583.6500000000001px;top:187.28px;font-size:5.2px;font-weight:normal;color:#333;font-family:'Liberation Serif',serif;transform:translateX(-50%);">15</span>
<span id="t52" class="t" style="left:605.5px;top:187.28px;font-size:5.2px;font-weight:normal;color:#333;font-family:'Liberation Serif',serif;transform:translateX(-50%);">16</span>
<span id="t53" class="t" style="left:627.2px;top:187.28px;font-size:5.2px;font-weight:normal;color:#333;font-family:'Liberation Serif',serif;transform:translateX(-50%);">17</span>
<span id="t54" class="t" style="left:216.8px;top:198.48px;font-size:5.2px;font-weight:normal;color:#333;font-family:'Liberation Serif',serif;transform:translateX(-50%);">2017-03</span>
<span id="t55" class="t" style="left:453.5px;top:198.48px;font-size:5.2px;font-weight:normal;color:#333;font-family:'Liberation Serif',serif;transform:translateX(-50%);">2017-04</span>
<span id="t56" class="t" style="left:641.3px;top:107.22px;font-size:6.8px;font-weight:normal;color:#333;font-family:'Liberation Sans',sans-serif;">8</span>
<span id="t57" class="t" style="left:641.3px;top:138.62px;font-size:6.8px;font-weight:normal;color:#333;font-family:'Liberation Sans',sans-serif;">4</span>
<span id="t58" class="t" style="left:149.8px;top:230.32px;font-size:6.45px;font-weight:normal;color:#333;font-family:'Liberation Sans',sans-serif;transform:scaleX(0.8272);transform-origin:0 0;">Screen content:</span>
<span id="t59" class="t" style="left:344.8px;top:241.30px;font-size:5.65px;font-weight:bold;color:#333;font-family:'Liberation Sans',sans-serif;transform:scaleX(0.8902);transform-origin:0 0;">FILTER >>></span>
<span id="t60" class="t" style="left:333.3px;top:254.90px;font-size:6.23px;font-weight:normal;color:#2a2fc4;font-family:'Liberation Sans',sans-serif;transform:scaleX(0.8835);transform-origin:0 0;">Clear conditions</span>
<span id="t61" class="t" style="left:505px;top:225.94px;font-size:5.72px;font-weight:normal;color:#333;font-family:'Liberation Sans',sans-serif;transform:scaleX(0.9688);transform-origin:0 0;">Predefined filter conditions</span>
<span id="t62" class="t" style="left:592.5px;top:225.94px;font-size:5.72px;font-weight:normal;color:#333;font-family:'Liberation Sans',sans-serif;transform:scaleX(0.9817);transform-origin:0 0;">Export format</span>
<span id="t63" class="t" style="left:509.3px;top:237.76px;font-size:6.52px;font-weight:normal;color:#222;font-family:'Liberation Sans',sans-serif;transform:scaleX(0.9176);transform-origin:0 0;">Default filter</span>
<span id="t64" class="t" style="left:596.9px;top:237.76px;font-size:6.52px;font-weight:normal;color:#222;font-family:'Liberation Sans',sans-serif;transform:scaleX(0.9163);transform-origin:0 0;">Audit Player</span>
<span id="t65" class="t" style="left:522.3px;top:256.00px;font-size:5.65px;font-weight:bold;color:#333;font-family:'Liberation Sans',sans-serif;transform:scaleX(0.9113);transform-origin:0 0;">SAVE AS</span>
<span id="t66" class="t" style="left:609.8px;top:256.00px;font-size:5.65px;font-weight:bold;color:#333;font-family:'Liberation Sans',sans-serif;transform:scaleX(0.9051);transform-origin:0 0;">EXPORT</span>
<span id="t67" class="t" style="left:147.2px;top:274.68px;font-size:6.38px;font-weight:normal;color:#333;font-family:'Liberation Sans',sans-serif;transform:scaleX(0.8782);transform-origin:0 0;">Selected: 2017-04-07 00:00:00 - 2017-04-07 23:59:59 (7 results)</span>
<span id="t68" class="t" style="left:509.8px;top:274.50px;font-size:6.23px;font-weight:normal;color:#2a2fc4;font-family:'Liberation Sans',sans-serif;transform:scaleX(0.8622);transform-origin:0 0;">Manage statistics...</span>
<span id="t69" class="t" style="left:562.7px;top:274.50px;font-size:6.23px;font-weight:normal;color:#2a2fc4;font-family:'Liberation Sans',sans-serif;transform:scaleX(0.8561);transform-origin:0 0;">Customize columns...</span>
<span id="t70" class="t" style="left:625.5px;top:280.30px;font-size:6.23px;font-weight:normal;color:#222;font-family:'Liberation Sans',sans-serif;transform:scaleX(0.8813);transform-origin:0 0;">15</span>
<span id="t71" class="t" style="left:644.9px;top:279.12px;font-size:6.09px;font-weight:normal;color:#333;font-family:'Liberation Sans',sans-serif;transform:scaleX(0.7875);transform-origin:0 0;">per page</span>
<span id="t72" class="t" style="left:193.4px;top:299.33px;font-size:6.67px;font-weight:bold;color:#333;font-family:'Liberation Sans',sans-serif;transform:scaleX(0.9310);transform-origin:0 0;">AUDIT TRAIL</span>
<span id="t73" class="t" style="left:269.8px;top:299.33px;font-size:6.67px;font-weight:bold;color:#333;font-family:'Liberation Sans',sans-serif;transform:scaleX(0.9343);transform-origin:0 0;">VERDICT</span>
<span id="t74" class="t" style="left:336.9px;top:299.33px;font-size:6.67px;font-weight:bold;color:#333;font-family:'Liberation Sans',sans-serif;transform:scaleX(0.9040);transform-origin:0 0;">PROTOCOL</span>
<span id="t75" class="t" style="left:406.2px;top:299.33px;font-size:6.67px;font-weight:bold;color:#333;font-family:'Liberation Sans',sans-serif;transform:scaleX(0.9099);transform-origin:0 0;">START TIME</span>
<span id="t76" class="t" style="left:477.2px;top:299.33px;font-size:6.67px;font-weight:bold;color:#333;font-family:'Liberation Sans',sans-serif;transform:scaleX(0.9619);transform-origin:0 0;">END TIME</span>
<span id="t77" class="t" style="left:543.9px;top:299.33px;font-size:6.67px;font-weight:bold;color:#333;font-family:'Liberation Sans',sans-serif;transform:scaleX(0.9815);transform-origin:0 0;">DURATION</span>
<div style="left:602.6px;top:299.33px;width:61.3px;height:9.34px;overflow:hidden;"><span id="t78" class="t" style="left:0;top:0;font-size:6.67px;font-weight:bold;color:#333;font-family:'Liberation Sans',sans-serif;transform:scaleX(0.9471);transform-origin:0 0;">CONNECTION POLICY</span></div>
<span id="t79" class="t" style="left:186.2px;top:313.00px;font-size:6.23px;font-weight:normal;color:#222;font-family:'Liberation Sans',sans-serif;transform:scaleX(0.9556);transform-origin:0 0;">*ALL*</span>
<span id="t80" class="t" style="left:327.5px;top:313.00px;font-size:6.23px;font-weight:normal;color:#222;font-family:'Liberation Sans',sans-serif;transform:scaleX(0.9430);transform-origin:0 0;">*ALL*</span>
<span id="t81" class="t" style="left:157.2px;top:344.98px;font-size:5.2px;font-weight:bold;color:#484848;font-family:'Liberation Sans',sans-serif;">1</span>
<div style="left:254.8px;top:344.03px;width:64.5px;height:9.34px;overflow:hidden;"><span id="t82" class="t" style="left:0;top:0;font-size:6.67px;font-weight:normal;color:#3c3c3c;font-family:'Liberation Sans',sans-serif;transform:scaleX(0.9884);transform-origin:0 0;">CONN-GW-AUTH-FAIL</span></div>
<span id="t83" class="t" style="left:322.8px;top:344.03px;font-size:6.67px;font-weight:normal;color:#3c3c3c;font-family:'Liberation Sans',sans-serif;transform:scaleX(0.8688);transform-origin:0 0;">ssh</span>
<span id="t84" class="t" style="left:395.7px;top:344.03px;font-size:6.67px;font-weight:normal;color:#3c3c3c;font-family:'Liberation Sans',sans-serif;transform:scaleX(0.9982);transform-origin:0 0;">2017-04-07 12:28:00</span>
<span id="t85" class="t" style="left:463.9px;top:344.03px;font-size:6.67px;font-weight:normal;color:#3c3c3c;font-family:'Liberation Sans',sans-serif;transform:scaleX(0.9982);transform-origin:0 0;">2017-04-07 12:28:01</span>
<span id="t86" class="t" style="left:532.1px;top:344.03px;font-size:6.67px;font-weight:normal;color:#3c3c3c;font-family:'Liberation Sans',sans-serif;transform:scaleX(0.9321);transform-origin:0 0;">00: 00: 01</span>
<span id="t87" class="t" style="left:600.3px;top:344.03px;font-size:6.67px;font-weight:normal;color:#3c3c3c;font-family:'Liberation Sans',sans-serif;transform:scaleX(0.9295);transform-origin:0 0;">ssh_gateway_auth</span>
<span id="t88" class="t" style="left:155.4px;top:363.88px;font-size:5.2px;font-weight:bold;color:#484848;font-family:'Liberation Sans',sans-serif;">2</span>
<div style="left:254.8px;top:362.93px;width:64.5px;height:9.34px;overflow:hidden;"><span id="t89" class="t" style="left:0;top:0;font-size:6.67px;font-weight:normal;color:#3c3c3c;font-family:'Liberation Sans',sans-serif;transform:scaleX(0.9759);transform-origin:0 0;">CONN-AUTH-FAIL</span></div>
<span id="t90" class="t" style="left:322.8px;top:362.93px;font-size:6.67px;font-weight:normal;color:#3c3c3c;font-family:'Liberation Sans',sans-serif;transform:scaleX(0.8688);transform-origin:0 0;">ssh</span>
<span id="t91" class="t" style="left:395.7px;top:362.93px;font-size:6.67px;font-weight:normal;color:#3c3c3c;font-family:'Liberation Sans',sans-serif;transform:scaleX(0.9982);transform-origin:0 0;">2017-04-07 12:28:01</span>
<span id="t92" class="t" style="left:463.9px;top:362.93px;font-size:6.67px;font-weight:normal;color:#3c3c3c;font-family:'Liberation Sans',sans-serif;transform:scaleX(0.9982);transform-origin:0 0;">2017-04-07 12:28:01</span>
<span id="t93" class="t" style="left:532.1px;top:362.93px;font-size:6.67px;font-weight:normal;color:#3c3c3c;font-family:'Liberation Sans',sans-serif;transform:scaleX(0.9321);transform-origin:0 0;">00: 00: 00</span>
<span id="t94" class="t" style="left:600.3px;top:362.93px;font-size:6.67px;font-weight:normal;color:#3c3c3c;font-family:'Liberation Sans',sans-serif;transform:scaleX(0.9295);transform-origin:0 0;">ssh_gateway_auth</span>
<span id="t95" class="t" style="left:155.4px;top:382.68px;font-size:5.2px;font-weight:bold;color:#484848;font-family:'Liberation Sans',sans-serif;">3</span>
<div style="left:254.8px;top:380.73px;width:64.5px;height:9.34px;overflow:hidden;"><span id="t96" class="t" style="left:0;top:0;font-size:6.67px;font-weight:normal;color:#3c3c3c;font-family:'Liberation Sans',sans-serif;transform:scaleX(0.9575);transform-origin:0 0;">CONN-DENY</span></div>
<span id="t97" class="t" style="left:322.8px;top:380.73px;font-size:6.67px;font-weight:normal;color:#3c3c3c;font-family:'Liberation Sans',sans-serif;transform:scaleX(0.8688);transform-origin:0 0;">ssh</span>
<span id="t98" class="t" style="left:395.7px;top:380.73px;font-size:6.67px;font-weight:normal;color:#3c3c3c;font-family:'Liberation Sans',sans-serif;transform:scaleX(0.9982);transform-origin:0 0;">2017-04-07 12:28:01</span>
<span id="t99" class="t" style="left:463.9px;top:380.73px;font-size:6.67px;font-weight:normal;color:#3c3c3c;font-family:'Liberation Sans',sans-serif;transform:scaleX(0.9982);transform-origin:0 0;">2017-04-07 12:28:01</span>
<span id="t100" class="t" style="left:532.1px;top:380.73px;font-size:6.67px;font-weight:normal;color:#3c3c3c;font-family:'Liberation Sans',sans-serif;transform:scaleX(0.9321);transform-origin:0 0;">00: 00: 00</span>
<span id="t101" class="t" style="left:600.3px;top:380.73px;font-size:6.67px;font-weight:normal;color:#3c3c3c;font-family:'Liberation Sans',sans-serif;transform:scaleX(0.9295);transform-origin:0 0;">ssh_gateway_auth</span>
<span id="t102" class="t" style="left:157.2px;top:402.28px;font-size:5.2px;font-weight:bold;color:#484848;font-family:'Liberation Sans',sans-serif;">4</span>
<div style="left:254.8px;top:400.33px;width:64.5px;height:9.34px;overflow:hidden;"><span id="t103" class="t" style="left:0;top:0;font-size:6.67px;font-weight:normal;color:#3c3c3c;font-family:'Liberation Sans',sans-serif;transform:scaleX(0.9884);transform-origin:0 0;">CONN-GW-AUTH-FAIL</span></div>
<span id="t104" class="t" style="left:322.8px;top:400.33px;font-size:6.67px;font-weight:normal;color:#3c3c3c;font-family:'Liberation Sans',sans-serif;transform:scaleX(0.8688);transform-origin:0 0;">ssh</span>
<span id="t105" class="t" style="left:395.7px;top:400.33px;font-size:6.67px;font-weight:normal;color:#3c3c3c;font-family:'Liberation Sans',sans-serif;transform:scaleX(0.9982);transform-origin:0 0;">2017-04-07 12:28:48</span>
<span id="t106" class="t" style="left:463.9px;top:400.33px;font-size:6.67px;font-weight:normal;color:#3c3c3c;font-family:'Liberation Sans',sans-serif;transform:scaleX(0.9982);transform-origin:0 0;">2017-04-07 12:28:48</span>
<span id="t107" class="t" style="left:532.1px;top:400.33px;font-size:6.67px;font-weight:normal;color:#3c3c3c;font-family:'Liberation Sans',sans-serif;transform:scaleX(0.9321);transform-origin:0 0;">00: 00: 00</span>
<span id="t108" class="t" style="left:600.3px;top:400.33px;font-size:6.67px;font-weight:normal;color:#3c3c3c;font-family:'Liberation Sans',sans-serif;transform:scaleX(0.9295);transform-origin:0 0;">ssh_gateway_auth</span>
<span id="t109" class="t" style="left:155.4px;top:421.28px;font-size:5.2px;font-weight:bold;color:#484848;font-family:'Liberation Sans',sans-serif;">5</span>
<div style="left:254.8px;top:419.33px;width:64.5px;height:9.34px;overflow:hidden;"><span id="t110" class="t" style="left:0;top:0;font-size:6.67px;font-weight:normal;color:#3c3c3c;font-family:'Liberation Sans',sans-serif;transform:scaleX(0.9759);transform-origin:0 0;">CONN-AUTH-FAIL</span></div>
<span id="t111" class="t" style="left:322.8px;top:419.33px;font-size:6.67px;font-weight:normal;color:#3c3c3c;font-family:'Liberation Sans',sans-serif;transform:scaleX(0.8688);transform-origin:0 0;">ssh</span>
<span id="t112" class="t" style="left:395.7px;top:419.33px;font-size:6.67px;font-weight:normal;color:#3c3c3c;font-family:'Liberation Sans',sans-serif;transform:scaleX(0.9982);transform-origin:0 0;">2017-04-07 12:28:48</span>
<span id="t113" class="t" style="left:463.9px;top:419.33px;font-size:6.67px;font-weight:normal;color:#3c3c3c;font-family:'Liberation Sans',sans-serif;transform:scaleX(0.9982);transform-origin:0 0;">2017-04-07 12:28:48</span>
<span id="t114" class="t" style="left:532.1px;top:419.33px;font-size:6.67px;font-weight:normal;color:#3c3c3c;font-family:'Liberation Sans',sans-serif;transform:scaleX(0.9321);transform-origin:0 0;">00: 00: 00</span>
<span id="t115" class="t" style="left:600.3px;top:419.33px;font-size:6.67px;font-weight:normal;color:#3c3c3c;font-family:'Liberation Sans',sans-serif;transform:scaleX(0.9295);transform-origin:0 0;">ssh_gateway_auth</span>
<span id="t116" class="t" style="left:155.4px;top:438.68px;font-size:5.2px;font-weight:bold;color:#484848;font-family:'Liberation Sans',sans-serif;">6</span>
<div style="left:254.8px;top:436.73px;width:64.5px;height:9.34px;overflow:hidden;"><span id="t117" class="t" style="left:0;top:0;font-size:6.67px;font-weight:normal;color:#3c3c3c;font-family:'Liberation Sans',sans-serif;transform:scaleX(0.9575);transform-origin:0 0;">CONN-DENY</span></div>
<span id="t118" class="t" style="left:322.8px;top:436.73px;font-size:6.67px;font-weight:normal;color:#3c3c3c;font-family:'Liberation Sans',sans-serif;transform:scaleX(0.8688);transform-origin:0 0;">ssh</span>
<span id="t119" class="t" style="left:395.7px;top:436.73px;font-size:6.67px;font-weight:normal;color:#3c3c3c;font-family:'Liberation Sans',sans-serif;transform:scaleX(0.9982);transform-origin:0 0;">2017-04-07 12:28:48</span>
<span id="t120" class="t" style="left:463.9px;top:436.73px;font-size:6.67px;font-weight:normal;color:#3c3c3c;font-family:'Liberation Sans',sans-serif;transform:scaleX(0.9982);transform-origin:0 0;">2017-04-07 12:28:48</span>
<span id="t121" class="t" style="left:532.1px;top:436.73px;font-size:6.67px;font-weight:normal;color:#3c3c3c;font-family:'Liberation Sans',sans-serif;transform:scaleX(0.9321);transform-origin:0 0;">00: 00: 00</span>
<span id="t122" class="t" style="left:600.3px;top:436.73px;font-size:6.67px;font-weight:normal;color:#3c3c3c;font-family:'Liberation Sans',sans-serif;transform:scaleX(0.9295);transform-origin:0 0;">ssh_gateway_auth</span>
</div></body></html>
